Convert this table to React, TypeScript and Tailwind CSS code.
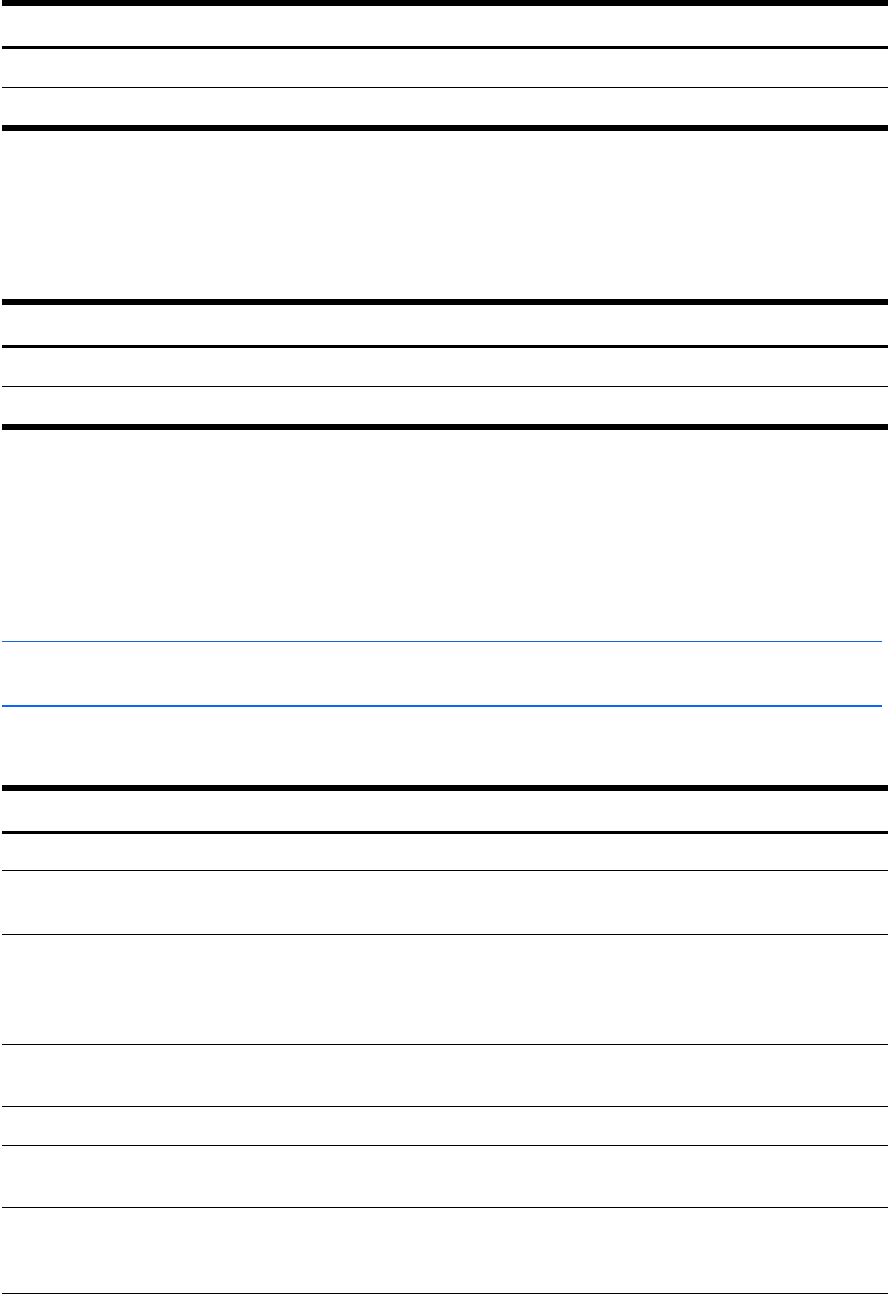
export default function App() {
  return (
    <div className="w-[888px] h-[1294px] bg-white pl-[2px] flex flex-col overflow-hidden">
      <div className="h-[6px] bg-black shrink-0" />
      <div className="h-[3px] bg-black mt-[40px] shrink-0" />
      <div className="h-[1px] bg-black mt-[38px] shrink-0" />
      <div className="h-[6px] bg-black mt-[37px] shrink-0" />

      <div className="h-[6px] bg-black mt-[168px] shrink-0" />
      <div className="h-[3px] bg-black mt-[40px] shrink-0" />
      <div className="h-[1px] bg-black mt-[38px] shrink-0" />
      <div className="h-[6px] bg-black mt-[37px] shrink-0" />

      <div className="h-[1px] bg-[#1a62dc] mt-[211px] mr-[6px] shrink-0" />
      <div className="h-[2px] bg-[#0a66fa] mt-[63px] mr-[6px] shrink-0" />

      <div className="h-[6px] bg-black mt-[78px] shrink-0" />
      <div className="h-[3px] bg-black mt-[40px] shrink-0" />
      <div className="h-[1px] bg-black mt-[36px] shrink-0" />
      <div className="h-[1px] bg-black mt-[63px] shrink-0" />
      <div className="h-[1px] bg-black mt-[109px] shrink-0" />
      <div className="h-[1px] bg-black mt-[61px] shrink-0" />
      <div className="h-[1px] bg-black mt-[38px] shrink-0" />
      <div className="h-[1px] bg-black mt-[61px] shrink-0" />
      <div className="h-[1px] bg-black mt-[85px] shrink-0" />
    </div>
  );
}
